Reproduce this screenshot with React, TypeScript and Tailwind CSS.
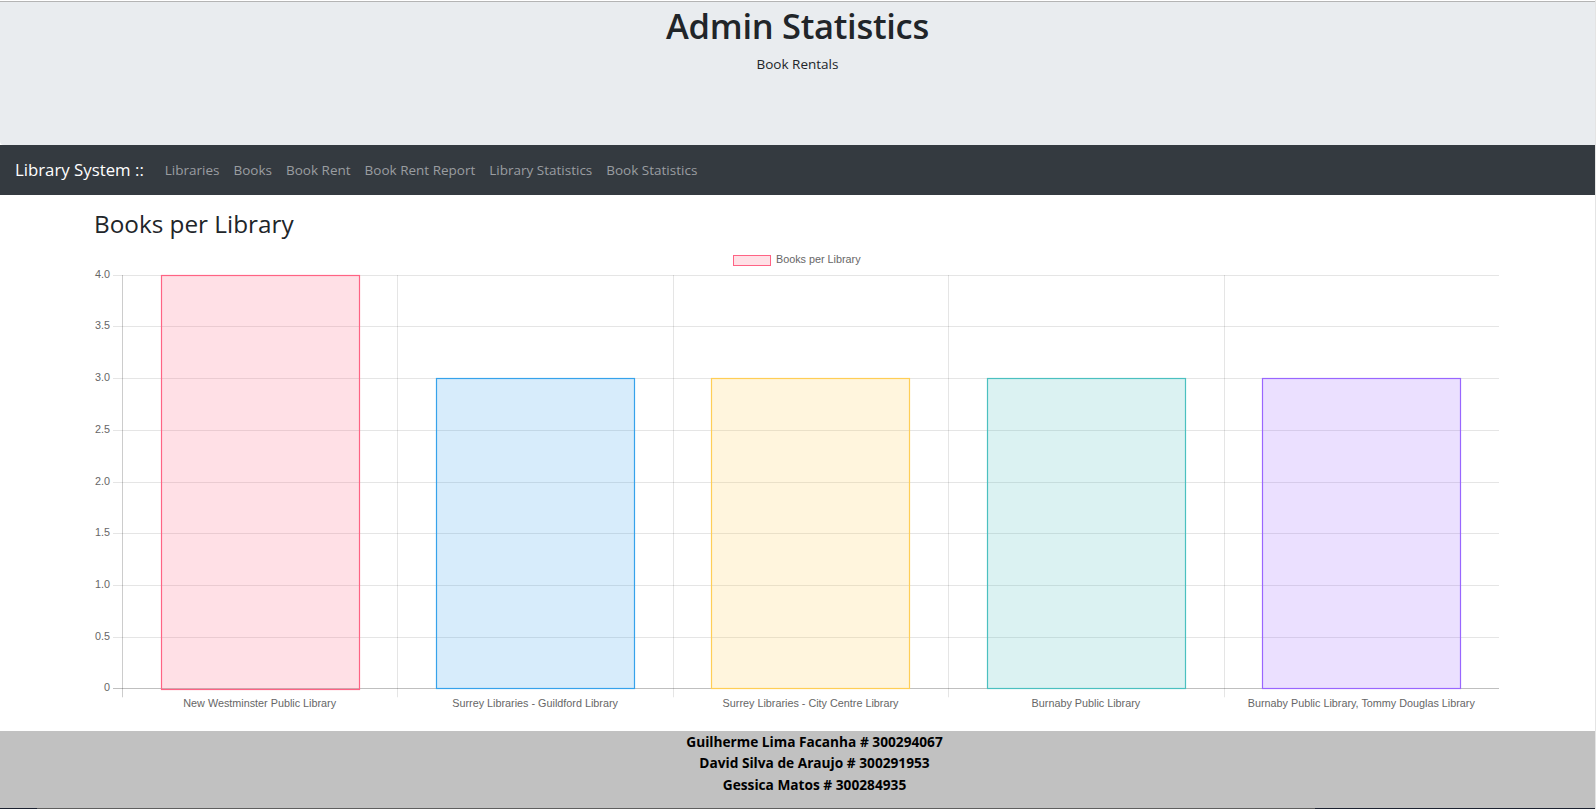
const font = { fontFamily: '"Open Sans", "Noto Sans", sans-serif' }

const navLinks = ["Libraries", "Books", "Book Rent", "Book Rent Report", "Library Statistics", "Book Statistics"]

const data = [
  { label: "New Westminster Public Library", value: 4, fill: "rgba(255,99,132,0.2)", stroke: "rgb(255,99,132)" },
  { label: "Surrey Libraries - Guildford Library", value: 3, fill: "rgba(54,162,235,0.2)", stroke: "rgb(54,162,235)" },
  { label: "Surrey Libraries - City Centre Library", value: 3, fill: "rgba(255,206,86,0.2)", stroke: "rgb(255,206,86)" },
  { label: "Burnaby Public Library", value: 3, fill: "rgba(75,192,192,0.2)", stroke: "rgb(75,192,192)" },
  { label: "Burnaby Public Library, Tommy Douglas Library", value: 3, fill: "rgba(153,102,255,0.2)", stroke: "rgb(153,102,255)" },
]

const yTicks = ["4.0", "3.5", "3.0", "2.5", "2.0", "1.5", "1.0", "0.5", "0"]

// chart geometry, in page x and svg y (page y - 245)
const left = 122
const right = 1499
const top = 29.7
const step = 51.7
const bottom = top + step * 8
const catW = (right - left) / 5
const barW = catW * 0.72

function BarChart() {
  return (
    <svg width="1595" height="486" className="block" style={{ fontFamily: '"Liberation Sans", Arial, sans-serif' }}>
      {/* legend */}
      <rect x="733.5" y="10.5" width="37" height="10" fill="rgba(255,99,132,0.2)" stroke="rgb(255,99,132)" strokeWidth="1" />
      <text x="776" y="15.5" fontSize="10.8" fill="#666" dominantBaseline="middle">Books per Library</text>

      {/* horizontal grid + y labels */}
      {yTicks.map((t, i) => {
        const y = Math.round(top + i * step) + 0.5
        return (
          <g key={t}>
            <line x1={113} x2={right} y1={y} y2={y} stroke={i === 8 ? "rgba(0,0,0,0.25)" : "rgba(0,0,0,0.1)"} strokeWidth="1" />
            <text x="110" y={y} fontSize="10.8" fill="#666" textAnchor="end" dominantBaseline="middle">{t}</text>
          </g>
        )
      })}

      {/* vertical grid */}
      {[0, 1, 2, 3, 4].map((k) => {
        const x = Math.round(left + k * catW) + 0.5
        return (
          <line key={k} x1={x} x2={x} y1={Math.round(top)} y2={bottom + 9} stroke={k === 0 ? "rgba(0,0,0,0.2)" : "rgba(0,0,0,0.1)"} strokeWidth="1" />
        )
      })}

      {/* bars */}
      {data.map((d, i) => {
        const cx = left + catW * (i + 0.5)
        const yTop = bottom - d.value * step * 2
        return (
          <g key={d.label}>
            <rect x={Math.round(cx - barW / 2) + 0.5} y={Math.round(yTop) + 0.5} width={Math.round(barW)} height={Math.round(bottom - yTop)} fill={d.fill} stroke={d.stroke} strokeWidth="1.2" />
            <text x={cx} y="459.5" fontSize="10.8" fill="#666" textAnchor="middle" dominantBaseline="middle">{d.label}</text>
          </g>
        )
      })}
    </svg>
  )
}

export default function App() {
  return (
    <div className="w-[1596px] h-[809px] overflow-hidden bg-white text-[#212529] border-r border-[#e4e4e4]" style={font}>
      <div className="h-px bg-white" />
      <div className="h-px bg-[#b4b4b4]" />

      <header className="h-[143px] bg-[#e9ecef] rounded-bl-[4px] flex flex-col items-center pt-[3px]">
        <h1 className="text-[34.5px] leading-[42px] font-semibold tracking-[-0.3px]">Admin Statistics</h1>
        <p className="text-[13.5px] leading-[22px] mt-[6px]">Book Rentals</p>
      </header>

      <nav className="h-[50px] bg-[#343a40] flex items-center pl-[15px]">
        <span className="text-white text-[16.8px] mr-[14px]">Library System ::</span>
        {navLinks.map((l) => (
          <a key={l} className="px-[7px] text-[13.5px] text-[#9a9da0]">{l}</a>
        ))}
      </nav>

      <main className="h-[536px] flex flex-col">
        <h2 className="pl-[94px] pt-[14px] text-[24.3px] leading-[30px] font-medium h-[50px]">Books per Library</h2>
        <BarChart />
      </main>

      <footer className="h-[77px] bg-[#c1c1c1] flex flex-col items-center pl-[34px] text-[13.7px] leading-[21.4px] font-bold text-black">
        <p>Guilherme Lima Facanha # 300294067</p>
        <p>David Silva de Araujo # 300291953</p>
        <p>Gessica Matos # 300284935</p>
      </footer>
      <div className="h-px flex">
        <div className="w-[37px] bg-[#1c2230]" />
        <div className="w-[1278px] bg-[#5e5e5e]" />
        <div className="flex-1 bg-[#1c2230]" />
      </div>
    </div>
  )
}
